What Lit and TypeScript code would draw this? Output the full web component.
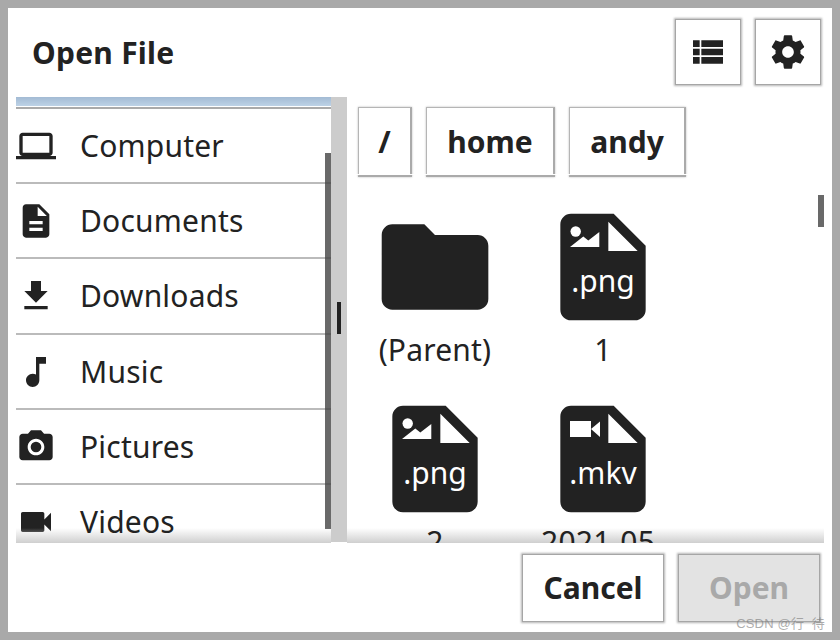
import { LitElement, html, css, svg } from "lit";
import { customElement } from "lit/decorators.js";

const ICONS: Record<string, string> = {
  laptop: "M20 18c1.1 0 1.99-.9 1.99-2L22 6c0-1.1-.9-2-2-2H4c-1.1 0-2 .9-2 2v10c0 1.1.9 2 2 2H0v2h24v-2h-4zM4 6h16v10H4V6z",
  doc: "M14 2H6c-1.1 0-1.99.9-1.99 2L4 20c0 1.1.89 2 1.99 2H18c1.1 0 2-.9 2-2V8l-6-6zm2 16H8v-2h8v2zm0-4H8v-2h8v2zm-3-5V3.5L18.5 9H13z",
  download: "M19 9h-4V3H9v6H5l7 7 7-7zM5 18v2h14v-2H5z",
  music: "M12 3v10.55c-.59-.34-1.27-.55-2-.55-2.21 0-4 1.79-4 4s1.79 4 4 4 4-1.79 4-4V7h4V3h-6z",
  camera: "M12 8.8a3.2 3.2 0 1 0 0 6.4 3.2 3.2 0 0 0 0-6.4zM9 2L7.17 4H4c-1.1 0-2 .9-2 2v12c0 1.1.9 2 2 2h16c1.1 0 2-.9 2-2V6c0-1.1-.9-2-2-2h-3.17L15 2H9zm3 15c-2.76 0-5-2.24-5-5s2.24-5 5-5 5 2.24 5 5-2.24 5-5 5z",
  video: "M17 10.5V7c0-.55-.45-1-1-1H4c-.55 0-1 .45-1 1v10c0 .55.45 1 1 1h12c.55 0 1-.45 1-1v-3.5l4 4v-11l-4 4z",
  list: "M3 14h4v-4H3v4zm0 5h4v-4H3v4zM3 9h4V5H3v4zm5 5h13v-4H8v4zm0 5h13v-4H8v4zM8 5v4h13V5H8z",
  gear: "M19.43 12.98c.04-.32.07-.64.07-.98s-.03-.66-.07-.98l2.11-1.65c.19-.15.24-.42.12-.64l-2-3.46c-.12-.22-.39-.3-.61-.22l-2.49 1c-.52-.4-1.08-.73-1.69-.98l-.38-2.65C14.46 2.18 14.25 2 14 2h-4c-.25 0-.46.18-.49.42l-.38 2.65c-.61.25-1.17.59-1.69.98l-2.49-1c-.23-.09-.49 0-.61.22l-2 3.46c-.13.22-.07.49.12.64l2.11 1.65c-.04.32-.07.65-.07.98s.03.66.07.98l-2.11 1.65c-.19.15-.24.42-.12.64l2 3.46c.12.22.39.3.61.22l2.49-1c.52.4 1.08.73 1.69.98l.38 2.65c.03.24.24.42.49.42h4c.25 0 .46-.18.49-.42l.38-2.65c.61-.25 1.17-.59 1.69-.98l2.49 1c.23.09.49 0 .61-.22l2-3.46c.12-.22.07-.49-.12-.64l-2.11-1.65zM12 15.5c-1.93 0-3.5-1.57-3.5-3.5s1.57-3.5 3.5-3.5 3.5 1.57 3.5 3.5-1.57 3.5-3.5 3.5z",
  folder: "M10 4H4c-1.1 0-1.99.9-1.99 2L2 18c0 1.1.9 2 2 2h16c1.1 0 2-.9 2-2V8c0-1.1-.9-2-2-2h-8l-2-2z",
  file: "M6 2c-1.1 0-2 .9-2 2v16c0 1.1.9 2 2 2h12c1.1 0 2-.9 2-2V8l-6-6H6zm7 7V3.5L18.5 9H13z",
};

const icon = (name: string, cls = "ico") =>
  html`<svg class=${cls} viewBox="0 0 24 24" fill="currentColor" fill-rule="evenodd"><path d=${ICONS[name]}></path></svg>`;

const miniImage = svg`<circle cx="36.7" cy="28.5" r="5.2"></circle><polygon points="31,44 44.3,33.5 49.3,37.5 60.3,29 60.3,44"></polygon>`;
const miniVideo = svg`<rect x="31" y="26" width="21" height="16"></rect><polygon points="52,34 61,26.5 61,42"></polygon>`;

const PLACES = [
  ["laptop", "Computer"],
  ["doc", "Documents"],
  ["download", "Downloads"],
  ["music", "Music"],
  ["camera", "Pictures"],
  ["video", "Videos"],
];

const FILES = [
  { label: "(Parent)", kind: "folder", ext: "" },
  { label: "1", kind: "image", ext: ".png" },
  { label: "2", kind: "image", ext: ".png" },
  { label: "2021-05-", kind: "video", ext: ".mkv" },
];

@customElement("app-root")
export class AppRoot extends LitElement {
  static styles = css`
    :host {
      display: flex;
      flex-direction: column;
      position: relative;
      width: 840px;
      height: 640px;
      box-sizing: border-box;
      border: 8px solid #a9a9a9;
      background: #fff;
      color: #222;
      font-family: "Noto Sans", sans-serif;
      font-size: 30px;
      letter-spacing: 0.2px;
      overflow: hidden;
    }
    .header {
      flex: none;
      height: 89px;
      box-sizing: border-box;
      display: flex;
      align-items: flex-start;
      padding: 11px 11px 0 24px;
      gap: 14px;
    }
    .title {
      flex: 1;
      font-size: 30px;
      font-weight: 700;
      line-height: 68px;
      letter-spacing: 0.25px;
    }
    .btn {
      box-sizing: border-box;
      display: flex;
      align-items: center;
      justify-content: center;
      background: #fff;
      border: 1px solid #a6a6a6;
      box-shadow: 0 0 2px 1px #b4b4b4;
      font-weight: 700;
      font-size: 30px;
      letter-spacing: 0;
    }
    .square {
      width: 66px;
      height: 66px;
    }
    .ico {
      width: 40px;
      height: 40px;
      display: block;
      flex: none;
    }
    .body {
      flex: 1;
      min-height: 0;
      display: flex;
      padding: 0 8px;
    }
    .places {
      position: relative;
      width: 315px;
      flex: none;
      overflow: hidden;
    }
    .strip {
      height: 9px;
      background: linear-gradient(#a3bbd4, #bdd2e6);
      border-bottom: 1px solid #fff;
    }
    .strip-line {
      height: 2px;
      background: #aaa;
    }
    .row {
      height: 75px;
      box-sizing: border-box;
      display: flex;
      align-items: center;
      border-bottom: 2px solid #bbb;
    }
    .row:nth-child(5) {
      height: 76px;
      padding-bottom: 1px;
    }
    .row:last-of-type {
      border-bottom: none;
    }
    .row .cell {
      width: 64px;
      flex: none;
      display: flex;
      justify-content: flex-start;
      box-sizing: border-box;
    }
    .row span,
    .label {
      position: relative;
      z-index: 1;
    }
    .fade {
      position: absolute;
      left: 0;
      right: 0;
      bottom: 0;
      height: 15px;
      background: linear-gradient(rgba(208, 208, 208, 0), #cfcfcf);
      pointer-events: none;
    }
    .thumb {
      position: absolute;
      width: 6px;
      background: rgba(68, 68, 68, 0.8);
    }
    .places .thumb {
      right: 0;
      top: 56px;
      height: 376px;
    }
    .splitter {
      width: 16px;
      flex: none;
      height: 445px;
      background: #ccc;
      display: flex;
      align-items: center;
      justify-content: center;
    }
    .splitter i {
      display: block;
      width: 4px;
      height: 32px;
      margin-top: -3px;
      background: #222;
    }
    .pane {
      position: relative;
      flex: 1;
      min-width: 0;
      overflow: hidden;
      padding: 10px 0 0 4px;
    }
    .pane .thumb {
      right: 0;
      top: 98px;
      height: 32px;
    }
    .crumbs {
      display: flex;
      gap: 14px;
      padding-left: 7px;
    }
    .crumb {
      position: relative;
      height: 70px;
      border: 1px solid #b5b5b5;
      border-right: 2px solid #aaa;
      border-bottom: 2px solid #aaa;
      box-shadow: 0 0 2px #bbb;
    }
    .crumb::after {
      content: "";
      position: absolute;
      left: -3px;
      right: -4px;
      bottom: 0;
      height: 1px;
      background: #fff;
    }
    .c1 { width: 54px; }
    .c2 { width: 129px; }
    .c3 { width: 117px; }
    .grid {
      display: grid;
      grid-template-columns: 168px 168px;
      grid-auto-rows: 192px;
      margin-top: 26px;
    }
    .item {
      display: flex;
      flex-direction: column;
      align-items: center;
      line-height: 40px;
    }
    .thumbbox {
      position: relative;
      width: 128px;
      height: 128px;
      flex: none;
    }
    .big {
      width: 128px;
      height: 128px;
      display: block;
    }
    .mini {
      position: absolute;
      inset: 0;
      width: 128px;
      height: 128px;
      fill: #fff;
    }
    .ext {
      position: absolute;
      left: 0;
      right: 0;
      top: 58px;
      text-align: center;
      color: #fff;
      line-height: 40px;
      letter-spacing: 0;
    }
    .label {
      margin-top: -1px;
    }
    .footer {
      flex: none;
      height: 89px;
      box-sizing: border-box;
      display: flex;
      justify-content: flex-end;
      gap: 14px;
      padding: 11px 12px 0 0;
    }
    .action {
      width: 142px;
      height: 68px;
      padding-bottom: 2px;
    }
    .disabled {
      background: #e3e3e3;
      color: #a9a9a9;
    }
    .mark {
      position: absolute;
      right: 7px;
      bottom: 0;
      font-family: "Liberation Sans", "Noto Sans CJK SC", sans-serif;
      font-size: 13px;
      line-height: 16px;
      letter-spacing: 0.2px;
      color: rgba(120, 120, 120, 0.6);
      white-space: pre;
    }
  `;

  private renderFile(f: (typeof FILES)[number]) {
    if (f.kind === "folder") {
      return html`<div class="thumbbox">${icon("folder", "big")}</div>`;
    }
    return html`<div class="thumbbox">
      ${icon("file", "big")}
      <svg class="mini" viewBox="0 0 128 128">${f.kind === "image" ? miniImage : miniVideo}</svg>
      <div class="ext">${f.ext}</div>
    </div>`;
  }

  render() {
    return html`
      <div class="header">
        <div class="title">Open File</div>
        <div class="btn square">${icon("list")}</div>
        <div class="btn square">${icon("gear")}</div>
      </div>
      <div class="body">
        <div class="places">
          <div class="strip"></div>
          <div class="strip-line"></div>
          ${PLACES.map(
            ([ic, name]) => html`<div class="row"><div class="cell">${icon(ic)}</div><span>${name}</span></div>`
          )}
          <div class="thumb"></div>
          <div class="fade"></div>
        </div>
        <div class="splitter"><i></i></div>
        <div class="pane">
          <div class="crumbs">
            <div class="btn crumb c1">/</div>
            <div class="btn crumb c2">home</div>
            <div class="btn crumb c3">andy</div>
          </div>
          <div class="grid">
            ${FILES.map(
              (f) => html`<div class="item">${this.renderFile(f)}<div class="label">${f.label}</div></div>`
            )}
          </div>
          <div class="thumb"></div>
          <div class="fade"></div>
        </div>
      </div>
      <div class="footer">
        <div class="btn action">Cancel</div>
        <div class="btn action disabled">Open</div>
      </div>
      <div class="mark">CSDN @行  待</div>
    `;
  }
}
